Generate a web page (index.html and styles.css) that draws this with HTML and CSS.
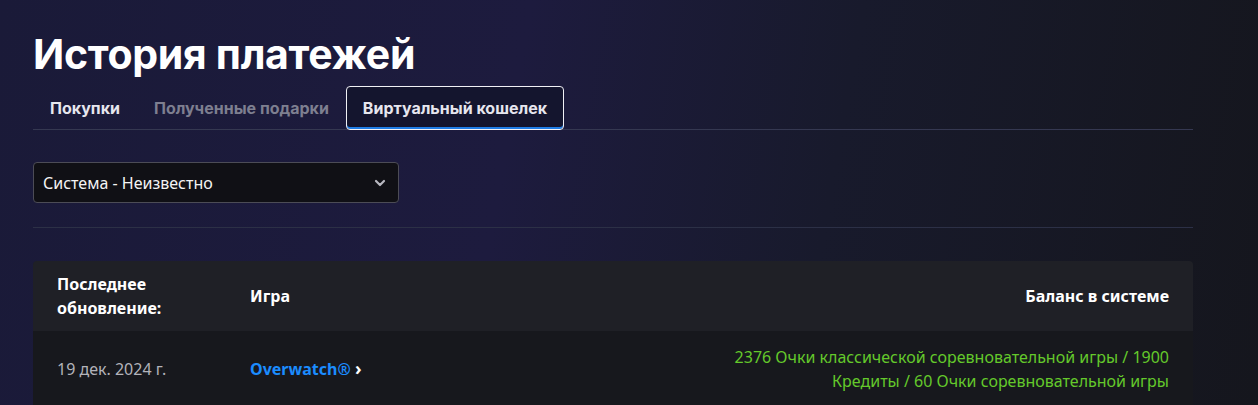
FILE: index.html
```html
<!DOCTYPE html>
<html lang="ru">
<head>
	<meta charset="UTF-8">
	<meta name="viewport" content="width=device-width, initial-scale=1">
	<title>История платежей</title>
	<link rel="stylesheet" href="styles.css">
</head>
<body>
	<div class="page">
		<h1 class="title">История платежей</h1>

		<div class="tabs">
			<a class="tab">Покупки</a>
			<a class="tab tab-muted">Полученные подарки</a>
			<a class="tab tab-active">Виртуальный кошелек</a>
		</div>

		<div class="filter">
			<div class="select">
				<span>Система - Неизвестно</span>
				<svg class="chevron" width="12" height="8" viewBox="0 0 12 8"><path d="M2 2l4 4 4-4" fill="none" stroke="#b8b8c0" stroke-width="2.2" stroke-linecap="round" stroke-linejoin="round"/></svg>
			</div>
		</div>

		<div class="table">
			<div class="thead">
				<div class="col-date">Последнее<br>обновление:</div>
				<div class="col-game">Игра</div>
				<div class="col-balance">Баланс в системе</div>
			</div>
			<div class="trow">
				<div class="col-date date">19 дек. 2024 г.</div>
				<div class="col-game"><a class="game-link">Overwatch®</a> <span class="arrow">›</span></div>
				<div class="col-balance balance">2376 Очки классической соревновательной игры / 1900<br>Кредиты / 60 Очки соревновательной игры</div>
			</div>
		</div>
	</div>
</body>
</html>
```

FILE: styles.css
```css
body {
	margin: 0;
	font-family: 'Noto Sans', 'Open Sans', sans-serif;
	color: #fff;
	background: linear-gradient(100deg, #1a1a38 0%, #1d1b3e 40%, #181a2c 65%, #15161d 100%);
	height: 405px;
	overflow: hidden;
}
.page {
	width: 1160px;
	margin: 0 0 0 33px;
	padding-top: 30px;
}
.title {
	font-family: Inter, sans-serif;
	font-weight: 700;
	font-size: 41px;
	letter-spacing: -0.3px;
	line-height: 48px;
	margin: 0 0 8px 0;
}
.tabs {
	display: flex;
	border-bottom: 1px solid #353851;
	height: 43px;
}
.tab {
	font-family: Inter, sans-serif;
	font-weight: 700;
	font-size: 16px;
	padding: 0 16px;
	display: flex;
	align-items: center;
	color: #e6e6ee;
	border: 1px solid transparent;
	border-radius: 4px;
	box-sizing: border-box;
	height: 44px;
}
.tab-muted {
	color: #7e7f90;
}
.tab-active {
	border-color: #f0f0f5;
	background: #14152e;
	box-shadow: inset 0 -2px 0 #1f7de6;
}
.filter {
	padding: 32px 0 24px;
	border-bottom: 1px solid #2c3046;
}
.select {
	width: 366px;
	height: 41px;
	box-sizing: border-box;
	background: #101015;
	border: 1px solid #4c4c56;
	border-radius: 4px;
	display: flex;
	align-items: center;
	justify-content: space-between;
	padding: 0 12px 0 9px;
	font-size: 16px;
	color: #f4f4f4;
}
.table {
	margin-top: 33px;
	border-radius: 4px 4px 0 0;
	overflow: hidden;
}
.thead, .trow {
	display: grid;
	grid-template-columns: 193px 300px 1fr;
	padding: 0 24px;
	align-items: center;
}
.thead {
	background: #1f2026;
	height: 70px;
	font-weight: 700;
	font-size: 16px;
	line-height: 24px;
}
.trow {
	background: #17181d;
	height: 75px;
	font-size: 16px;
	line-height: 24px;
}
.col-balance {
	text-align: right;
}
.date {
	color: #b3b3ba;
}
.game-link {
	color: #1b8cff;
	font-weight: 700;
}
.arrow {
	font-weight: 700;
	font-size: 18px;
}
.balance {
	color: #64c92b;
}
```
